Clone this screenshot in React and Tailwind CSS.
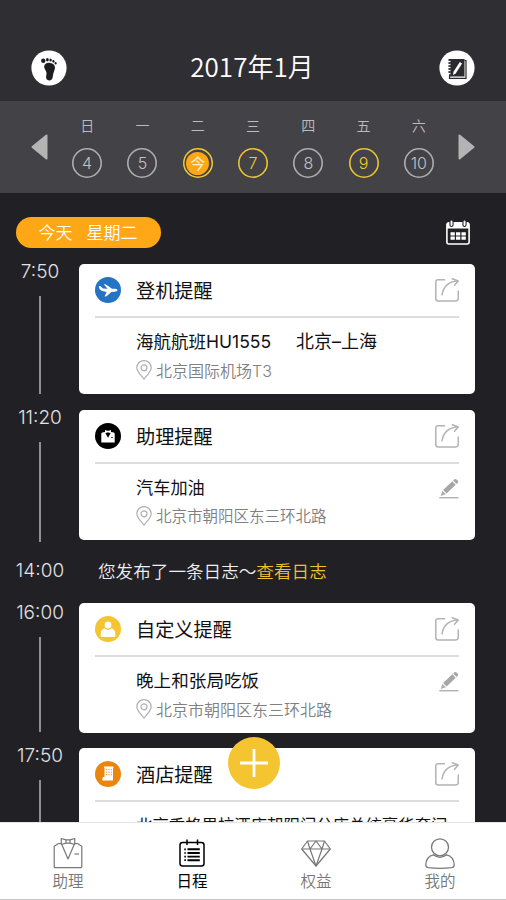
import React from "react";

const week = [
  { label: "日", day: "4" },
  { label: "一", day: "5" },
  { label: "二", day: "今", today: true },
  { label: "三", day: "7", marked: true },
  { label: "四", day: "8" },
  { label: "五", day: "9", marked: true },
  { label: "六", day: "10" },
];

const FootIcon = () => (
  <svg viewBox="0 0 36 36" className="size-9">
    <circle cx="18" cy="18" r="17.6" fill="#fff" />
    <g fill="#1d1c20">
      <path d="M13.2 16.2c.3-2.3 2.3-3.6 5-3.400 3.300.2 5.400 1.800 5.700 4.200.3 2.300-.8 3.900-1.400 5.900-.6 1.900-.5 3.300-1 5.100-.5 1.700-1.600 2.600-3.300 2.500-2.300-.1-3.400-1.700-3.100-3.900.2-1.700.7-2.700.2-4.600-.6-2-2.400-3.500-2.100-5.800z" />
      <ellipse cx="12.300" cy="10.800" rx="2.200" ry="2.300" />
      <ellipse cx="16.400" cy="9.700" rx="1.400" ry="1.700" />
      <ellipse cx="19.600" cy="10.100" rx="1.200" ry="1.500" />
      <ellipse cx="22.400" cy="11.300" rx="1.100" ry="1.400" />
      <ellipse cx="24.600" cy="13.200" rx="1" ry="1.300" />
    </g>
  </svg>
);

const NotebookIcon = () => (
  <svg viewBox="0 0 36 36" className="size-9">
    <circle cx="18" cy="18" r="17.600" fill="#fff" />
    <path d="M10 9h15.500v17.500H10z" fill="#2b2a2e" />
    <path d="M10.500 26v2.300H27V10.500h-1.500" fill="none" stroke="#2b2a2e" strokeWidth="1.200" />
    <path d="M8.500 11.500h3M8.500 14.500h3M8.500 17.500h3M8.500 20.500h3M8.500 23.500h3" stroke="#fff" strokeWidth="1.300" />
    <path d="M9 10h2.500M9 13h2.500M9 16h2.500M9 19h2.500M9 22h2.500" stroke="#2b2a2e" strokeWidth="1" />
    <path d="M20.800 12l2.300 1.500-6.300 9.700-2.800 2 .5-3.500z" fill="#fff" />
  </svg>
);

const CalendarIcon = () => (
  <svg viewBox="0 0 24 25" className="h-[25px] w-6">
    <rect x="0.900" y="3" width="22.200" height="21" rx="2" fill="none" stroke="#fff" strokeWidth="1.600" />
    <path d="M1 8.500V4q0-2 2-2h18q2 0 2 2v4.500z" fill="#fff" />
    <g stroke="#212025" strokeWidth="4.200" strokeLinecap="round">
      <path d="M5.500 1.500v3.500M18.500 1.500v3.500" />
    </g>
    <g stroke="#fff" strokeWidth="2" strokeLinecap="round">
      <path d="M5.500 1.500v3.500M18.500 1.500v3.500" />
    </g>
    <g fill="#fff">
      <path d="M4.500 12.200h4.300v3.200H4.500zM10 12.200h4.300v3.200H10zM15.500 12.200h4.300v3.200h-4.300zM4.500 16.600h4.300v3.200H4.500zM10 16.600h4.300v3.200H10zM15.500 16.600h4.300v3.200h-4.300z" />
    </g>
  </svg>
);

const ShareIcon = () => (
  <svg viewBox="0 0 24 24" className="size-6" fill="none" stroke="#b3b3b3" strokeWidth="1.500" strokeLinecap="round" strokeLinejoin="round">
    <path d="M9.500 1.700H3Q.8 1.700.8 4v16.500q0 2.500 2.400 2.500h17.600q2.500 0 2.500-2.500V13" />
    <path d="M7 16.800C8.200 9.800 12.500 3.600 22.500 3" />
    <path d="M17.300.7l5.900 2.300-3.700 4.300" />
  </svg>
);

const PencilIcon = () => (
  <svg viewBox="0 0 20 21" className="h-[21px] w-5">
    <path d="M.3 19.700h19.200" stroke="#b0b0b0" strokeWidth="1.400" />
    <path d="M1.700 18l1.700-5.200 3.500 3.500z" fill="#adadad" />
    <path d="M4.100 12l9.200-8.700 3.400 3.500-9.100 8.700z" fill="#a6a6a6" />
    <path d="M14.200 2.500l1.300-1.200q1-.8 2 .2l1.300 1.300q.9 1-.1 2l-1.100 1.100z" fill="#a6a6a6" />
  </svg>
);

const PinIcon = () => (
  <svg viewBox="0 0 16 20" className="h-5 w-4" fill="none" stroke="#b0b0b0" strokeWidth="1.200">
    <path d="M8 19C4.500 14.800.8 11.500.8 7.800a7.200 7.200 0 0 1 14.400 0C15.200 11.500 11.500 14.800 8 19z" />
    <circle cx="8" cy="7.800" r="3" />
  </svg>
);

const PlaneBadge = () => (
  <svg viewBox="0 0 26 26" className="size-[26px]">
    <circle cx="13" cy="13" r="13" fill="#2573c4" />
    <path d="M3.700 9.300l1.500-.3 2.800 2.600 4.700.2-3.900-4.300 1.700-.3 6.600 4.500h3.200q2.300.3 2.300 1.500-.2 1.300-3 1.600l-3.200.2-4.900 4.300-2 .1 2.200-4.400-3.600-.7q-2.400-.6-3.400-2z" fill="#fff" />
  </svg>
);

const SuitBadge = () => (
  <svg viewBox="0 0 26 26" className="size-[26px]">
    <circle cx="13" cy="13" r="13" fill="#000" />
    <path d="M6.300 10.800q0-1 1-1.300l2.400-.4 3.300 5.700 3.300-5.700 2.400.4q1 .3 1 1.300v8.700H6.300z" fill="#fff" />
    <path d="M10 7l2.200.8h1.600L16 7v3.200l-2.200-.7h-1.600l-2.200.7z" fill="#fff" />
    <path d="M16 14.500h2" stroke="#000" strokeWidth=".7" />
  </svg>
);

const PersonBadge = () => (
  <svg viewBox="0 0 26 26" className="size-[26px]">
    <circle cx="13" cy="13" r="13" fill="#f4c431" />
    <circle cx="13" cy="9" r="3.400" fill="#fff" />
    <path d="M9.300 12.300q3.700 3.200 7.400 0 3.600 1.700 3.600 5.600v2q0 1-1 1H6.700q-1 0-1-1v-2q0-3.900 3.600-5.600z" fill="#fff" />
  </svg>
);

const HotelBadge = () => (
  <svg viewBox="0 0 26 26" className="size-[26px]">
    <circle cx="13" cy="13" r="13" fill="#ea860f" />
    <path d="M9 5.500h9.500v1.300H18v12.700H7.500q-.8-3.500 2-3.700V6.800H9z" fill="#fff" />
    <path d="M11 8.700h6M11 11.200h6M11 13.700h6" stroke="#ea860f" strokeWidth="1" strokeDasharray="1.100 1.300" />
  </svg>
);

const SuitIcon = () => (
  <svg viewBox="0 0 30 32" className="h-8 w-[30px]" fill="none" stroke="currentColor" strokeWidth="1.200" strokeLinejoin="round">
    <path d="M8 6.500H5.500L1.200 9.300v20.400q0 1 1 1h25.600q1 0 1-1V9.300L24.500 6.500H22" />
    <path d="M8.500 6.800L15 22l6.500-15.200" />
    <path d="M8.300 1.500l4.700 1.300h4l4.700-1.300v6L17 6.200h-4L8.300 7.500zM13 2.800v3.400M17 2.800v3.400" />
    <path d="M21.500 17h4.500" />
  </svg>
);

const ScheduleIcon = () => (
  <svg viewBox="0 0 26 28" className="h-7 w-[26px]" fill="none" stroke="currentColor" strokeWidth="1.500">
    <rect x="1" y="3.500" width="24" height="23.500" rx="2.500" />
    <path d="M8 .5v5.500M18.500 .5v5.500" />
    <path d="M5.300 10.300h1.600M5.300 14h1.600M5.300 17.600h1.600M5.300 21.200h1.600" strokeWidth="1.700" />
    <path d="M8.500 10.300h12.300M8.500 14h12.300M8.500 17.600h12.300M8.500 21.200h12.300" strokeWidth="1.900" />
  </svg>
);

const DiamondIcon = () => (
  <svg viewBox="0 0 30 27" className="h-[27px] w-[30px]" fill="none" stroke="currentColor" strokeWidth="1.200" strokeLinejoin="round">
    <path d="M6.500 1h17L29.300 9 15 26 .7 9z" />
    <path d="M.7 9h28.600M6.500 1L9 9l6 17 6-17 2.500-8M9 9l6-8 6 8" />
  </svg>
);

const UserIcon = () => (
  <svg viewBox="0 0 30 31" className="h-[31px] w-[30px]" fill="none" stroke="currentColor" strokeWidth="1.300">
    <circle cx="15" cy="9.300" r="8.500" />
    <path d="M8.500 16.800C3.500 17.500.8 22.500.8 27q0 2.300 2.500 2.700 11.700 1.200 23.400 0 2.500-.4 2.500-2.700c0-4.500-2.700-9.500-7.700-10.200Q15 22 8.500 16.800z" />
  </svg>
);

const Time = ({ children }) => (
  <span className="font-['Inter',sans-serif] text-[19px] font-light leading-4 text-[#e2e2e4]">
    {children}
  </span>
);

const Event = ({
  time,
  badge,
  title,
  content,
  address,
  editable,
  className = "",
  timeClass = "",
  lineClass = "h-[98px]",
  contentClass = "text-[17.500px]",
  addressClass = "text-[16px]",
}) => (
  <div className={`flex h-[130px] shrink-0 ${className}`}>
    <div className={`flex w-[79px] shrink-0 flex-col items-center pl-px ${timeClass}`}>
      <Time>{time}</Time>
      <div className={`mt-4 w-0.5 shrink-0 bg-[#8f8f91] ${lineClass}`} />
    </div>
    <div className="h-[130px] w-[396px] rounded-[5px] bg-white px-4">
      <div className="flex h-[54px] items-center border-b-2 border-[#dcdcdc]">
        {badge}
        <h2 className="ml-[15px] flex-1 pt-px text-[19.200px] leading-6 text-[#111]">{title}</h2>
        <ShareIcon />
      </div>
      <div className="mt-3 ml-[41px] flex h-6 items-center justify-between">
        <p className={`whitespace-pre leading-6 text-[#111] ${contentClass}`}>{content}</p>
        {editable && <PencilIcon />}
      </div>
      {address && (
        <div className="mt-1.5 ml-[41px] flex h-5 items-center gap-1">
          <PinIcon />
          <p className={`pt-px font-[350] leading-5 text-[#808080] ${addressClass}`}>{address}</p>
        </div>
      )}
    </div>
  </div>
);

const NavItem = ({ icon, label, active }) => (
  <div className={`flex w-[124px] flex-col items-center ${active ? "text-black" : "text-[#777]"}`}>
    <div className="flex h-8 items-center">{icon}</div>
    <span className={`mt-[3px] text-[15.500px] leading-5 ${active ? "font-normal" : "font-[350]"}`}>{label}</span>
  </div>
);

const App = () => {
  return (
    <div className="relative flex h-[900px] w-[506px] flex-col overflow-hidden bg-[#212025] font-['Inter','Noto_Sans_CJK_SC',sans-serif]">
      <header className="flex h-[101px] shrink-0 items-center justify-between bg-[#2f2e33] pt-[35px] pr-[31px] pl-[31px]">
        <FootIcon />
        <h1 className="pr-0.5 pb-1 font-['Noto_Sans_CJK_SC',sans-serif] text-[26px] font-[350] leading-8 text-white">
          2017年1月
        </h1>
        <NotebookIcon />
      </header>

      <section className="flex h-[92px] shrink-0 items-center justify-between bg-[#434247] px-[31px]">
        <svg viewBox="0 0 17 26" className="h-[26px] w-[17px]">
          <path d="M15.500 1.500v23L1.500 13z" fill="#b4b4b5" stroke="#b4b4b5" strokeWidth="2" strokeLinejoin="round" />
        </svg>
        <div className="flex w-[387px] justify-between">
          {week.map((item) => (
            <div key={item.label} className="flex w-[55.300px] flex-col items-center gap-[14px] pt-0.5">
              <span className="text-[14px] font-[350] leading-4 text-[#bcbcbe]">{item.label}</span>
              {item.today ? (
                <div className="flex size-[30px] items-center justify-center rounded-full inset-ring-[1.500px] inset-ring-[#f4cb35]">
                  <span className="flex size-[23px] items-center justify-center rounded-full bg-[#ffa716] text-[15px] leading-none text-[#fff3c9]">
                    {item.day}
                  </span>
                </div>
              ) : (
                <div
                  className={`flex size-[30px] items-center justify-center rounded-full inset-ring-[1.600px] text-[16px] font-light ${
                    item.marked ? "inset-ring-[#e9c52f] text-[#f4cb35]" : "inset-ring-[#aeaeb0] text-[#c2c2c4]"
                  }`}
                >
                  {item.day}
                </div>
              )}
            </div>
          ))}
        </div>
        <svg viewBox="0 0 17 26" className="h-[26px] w-[17px]">
          <path d="M1.500 1.500v23l14-11.500z" fill="#b4b4b5" stroke="#b4b4b5" strokeWidth="2" strokeLinejoin="round" />
        </svg>
      </section>

      <main className="flex min-h-0 flex-1 flex-col overflow-hidden">
        <div className="flex h-[71px] shrink-0 items-center justify-between pt-2 pr-9 pl-4">
          <div className="flex h-[31px] w-[145px] items-center justify-center gap-[14px] rounded-full bg-[#ffa716] pt-0.5 pr-px text-[17px] font-[350] text-white">
            <span>今天</span>
            <span>星期二</span>
          </div>
          <CalendarIcon />
        </div>

        <Event
          time="7:50"
          badge={<PlaneBadge />}
          title="登机提醒"
          content={
            <>
              海航航班HU1555<span className="ml-[25px] text-[18px]">北京–上海</span>
            </>
          }
          address="北京国际机场T3"
        />
        <Event
          className="mt-4"
          lineClass="h-[100px]"
          contentClass="text-[17.200px]"
          addressClass="mt-px text-[15.500px]"
          time="11:20"
          badge={<SuitBadge />}
          title="助理提醒"
          content="汽车加油"
          address="北京市朝阳区东三环北路"
          editable
        />
        <div className="flex h-[63px] shrink-0 items-center pb-[2px]">
          <div className="flex w-[79px] justify-center pl-px">
            <Time>14:00</Time>
          </div>
          <p className="ml-[19px] pt-[3px] text-[17.600px] font-[350] text-[#eee]">
            您发布了一条日志～<span className="text-[#f1c232]">查看日志</span>
          </p>
        </div>
        <Event
          timeClass="pt-0.5"
          lineClass="h-[95px]"
          contentClass="text-[17.600px]"
          time="16:00"
          badge={<PersonBadge />}
          title="自定义提醒"
          content="晚上和张局吃饭"
          address="北京市朝阳区东三环北路"
          editable
        />
        <Event
          className="mt-[15px]"
          contentClass="-mt-0.5 text-[16.400px]"
          time="17:50"
          badge={<HotelBadge />}
          title="酒店提醒"
          content="北京香格里拉酒店朝阳门分店总统豪华套间"
        />
      </main>

      <nav className="flex h-[78px] shrink-0 border-t border-b border-t-[#e4e4e4] border-b-[#c8c8c8] bg-white pt-[14px] pl-1.5">
        <NavItem icon={<SuitIcon />} label="助理" />
        <NavItem icon={<ScheduleIcon />} label="日程" active />
        <NavItem icon={<DiamondIcon />} label="权益" />
        <NavItem icon={<UserIcon />} label="我的" />
      </nav>

      {/* floating add button */}
      <button className="absolute top-[737px] left-[228px] flex size-[52px] items-center justify-center rounded-full bg-[#f4c431]">
        <svg viewBox="0 0 30 30" className="size-[30px]" stroke="#fff" strokeWidth="2.800">
          <path d="M1 15h28M15 1v28" />
        </svg>
      </button>
    </div>
  );
};

export default App;
